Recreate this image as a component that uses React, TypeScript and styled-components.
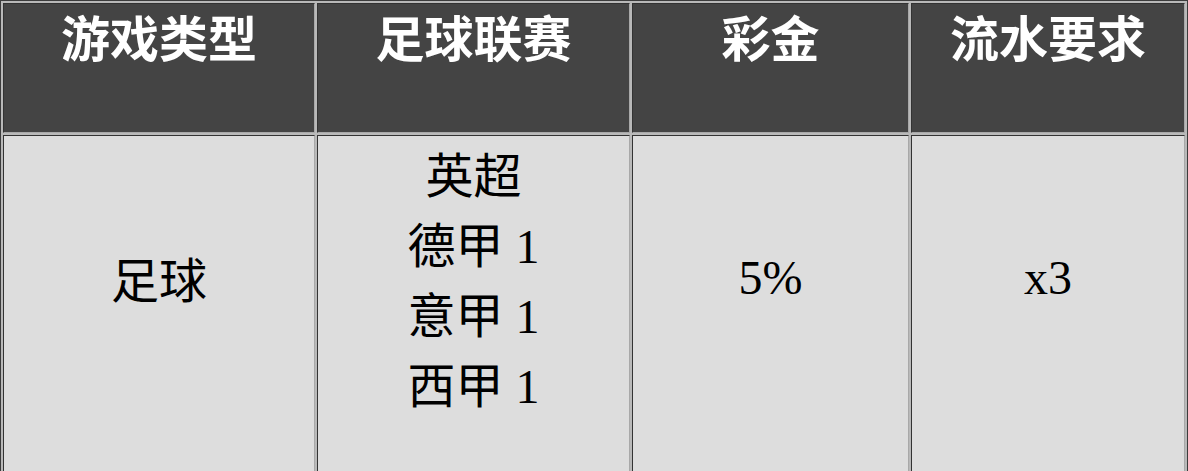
import React from "react";
import styled, { createGlobalStyle } from "styled-components";

const GlobalStyle = createGlobalStyle`
  html, body {
    margin: 0;
    padding: 0;
    background: #ffffff;
  }
`;

const Table = styled.table`
  width: 1188px;
  table-layout: fixed;
  border-collapse: separate;
  border-spacing: 2px;
  border: 1px solid #3c3c3c;
  background: #b9b9b9;
`;

const HeadCell = styled.th<{ $w: number }>`
  width: ${(p) => p.$w}px;
  height: 130px;
  box-sizing: border-box;
  padding: 3px 1px 0;
  vertical-align: top;
  text-align: center;
  background: #444444;
  color: #ffffff;
  font-family: "Noto Sans CJK SC", "Noto Sans", sans-serif;
  font-size: 49px;
  font-weight: 700;
  line-height: 1.2;
  border-style: solid;
  border-width: 1px;
  border-color: #333333 #a8a8a8 #a8a8a8 #333333;
`;

const BodyCell = styled.td<{ $top?: number }>`
  padding: ${(p) => p.$top ?? 1}px 1px 60px;
  vertical-align: middle;
  text-align: center;
  background: #dddddd;
  color: #000000;
  font-family: "Liberation Serif", "Noto Sans CJK SC", serif;
  font-size: 48px;
  font-weight: 400;
  border-style: solid;
  border-width: 1px;
  border-color: #333333 #a8a8a8 #a8a8a8 #333333;
`;

const LeagueLine = styled.div`
  white-space: nowrap;
`;

const columns = [
  { title: "游戏类型", width: 312 },
  { title: "足球联赛", width: 313 },
  { title: "彩金", width: 277 },
  { title: "流水要求", width: 274 },
];

const leagues = ["英超", "德甲 1", "意甲 1", "西甲 1"];

export default function App() {
  return (
    <>
      <GlobalStyle />
      <Table>
        <thead>
          <tr>
            {columns.map((c) => (
              <HeadCell key={c.title} $w={c.width}>
                {c.title}
              </HeadCell>
            ))}
          </tr>
        </thead>
        <tbody>
          <tr>
            <BodyCell>足球</BodyCell>
            <BodyCell $top={1}>
              {leagues.map((l) => (
                <LeagueLine key={l}>{l}</LeagueLine>
              ))}
            </BodyCell>
            <BodyCell>5%</BodyCell>
            <BodyCell>x3</BodyCell>
          </tr>
        </tbody>
      </Table>
    </>
  );
}
